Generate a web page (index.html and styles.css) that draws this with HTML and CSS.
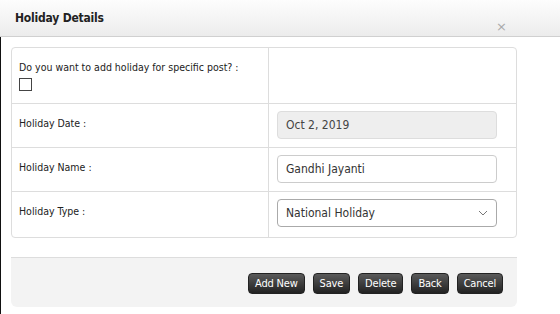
FILE: index.html
```html
<!DOCTYPE html>
<html lang="en">
<head>
  <meta charset="UTF-8" />
  <title>Holiday Details</title>
  <link rel="stylesheet" href="styles.css">
</head>
<body>

<div class="dialog">
  <div class="dialog-header">
    <h3>Holiday Details</h3>
    <span class="close-btn">×</span>
  </div>

  <div class="dialog-body">
    <table class="form-table">
      <tr class="row-post">
        <td class="label-cell">
          Do you want to add holiday for specific post? :
          <div><span class="checkbox"></span></div>
        </td>
        <td></td>
      </tr>
      <tr>
        <td class="label-cell">Holiday Date :</td>
        <td><div class="field field-disabled">Oct 2, 2019</div></td>
      </tr>
      <tr>
        <td class="label-cell">Holiday Name :</td>
        <td><div class="field">Gandhi Jayanti</div></td>
      </tr>
      <tr class="row-last">
        <td class="label-cell">Holiday Type :</td>
        <td>
          <div class="field field-select">
            <span>National Holiday</span>
            <svg width="10" height="6" viewBox="0 0 10 6"><path d="M1 1 L5 5 L9 1" fill="none" stroke="#777" stroke-width="1"/></svg>
          </div>
        </td>
      </tr>
    </table>

    <div class="actions">
      <button class="btn">Add New</button>
      <button class="btn">Save</button>
      <button class="btn">Delete</button>
      <button class="btn">Back</button>
      <button class="btn">Cancel</button>
    </div>
  </div>
</div>

</body>
</html>
```

FILE: styles.css
```css
* {
  box-sizing: border-box;
}

body {
  margin: 0;
  background: #fff;
  font-family: Tahoma, "DejaVu Sans Condensed", "DejaVu Sans", sans-serif;
  color: #222;
  width: 560px;
  height: 314px;
  overflow: hidden;
}

.dialog {
  height: 314px;
}

.dialog-header {
  height: 37px;
  background: linear-gradient(#fdfdfd, #ececec);
  border-bottom: 1px solid #d0d0d0;
  display: flex;
  justify-content: space-between;
  padding: 0 0 0 15px;
}

.dialog-header h3 {
  margin: 0;
  padding-top: 11px;
  font-family: "DejaVu Sans Condensed", "DejaVu Sans", sans-serif;
  font-size: 12px;
  font-weight: bold;
  color: #222;
  letter-spacing: -0.2px;
}

.close-btn {
  color: #aaa;
  font-size: 13px;
  padding: 19px 53px 0 0;
  font-family: "DejaVu Sans", sans-serif;
}

.dialog-body {
  border-left: 1px solid #111;
  padding: 10px 43px 8px 10px;
  height: 277px;
}

.form-table {
  width: 506px;
  border-collapse: separate;
  border-spacing: 0;
  border: 1px solid #ddd;
  border-radius: 4px;
  font-size: 10.5px;
  font-family: "DejaVu Sans Condensed", "DejaVu Sans", sans-serif;
}

.form-table td {
  border-top: 1px solid #ddd;
  vertical-align: top;
  padding: 0;
}

.form-table tr:first-child td {
  border-top: none;
}

.form-table td:first-child {
  width: 257px;
  border-right: 1px solid #ddd;
}

.label-cell {
  padding: 13px 8px 0 7px !important;
  height: 44px;
}

.row-post .label-cell {
  height: 55px;
}

.row-last .label-cell {
  height: 46px;
}

.checkbox {
  display: inline-block;
  width: 13px;
  height: 13px;
  border: 1px solid #444;
  margin-top: 5px;
}

.field {
  margin: 7px 0 8px 8px;
  width: 220px;
  height: 28px;
  border: 1px solid #ccc;
  border-radius: 4px;
  padding: 0 8px;
  display: flex;
  align-items: center;
  font-size: 12px;
  color: #333;
}

.field-disabled {
  background: #eee;
  border-color: #ddd;
  color: #444;
}

.field-select {
  border-color: #aaa;
  justify-content: space-between;
}

.actions {
  margin-top: 19px;
  width: 506px;
  height: 50px;
  background: #f3f3f3;
  border-top: 1px solid #ddd;
  border-radius: 0 0 6px 6px;
  display: flex;
  justify-content: flex-end;
  align-items: flex-start;
  gap: 8px;
  padding: 15px 14px 0 0;
}

.btn {
  height: 21px;
  padding: 0 6px;
  border: 1px solid #222;
  border-radius: 4px;
  background: linear-gradient(#5a5a5a, #222);
  color: #fff;
  font-family: "DejaVu Sans Condensed", "DejaVu Sans", sans-serif;
  font-size: 11px;
  letter-spacing: -0.2px;
  cursor: pointer;
}
```
